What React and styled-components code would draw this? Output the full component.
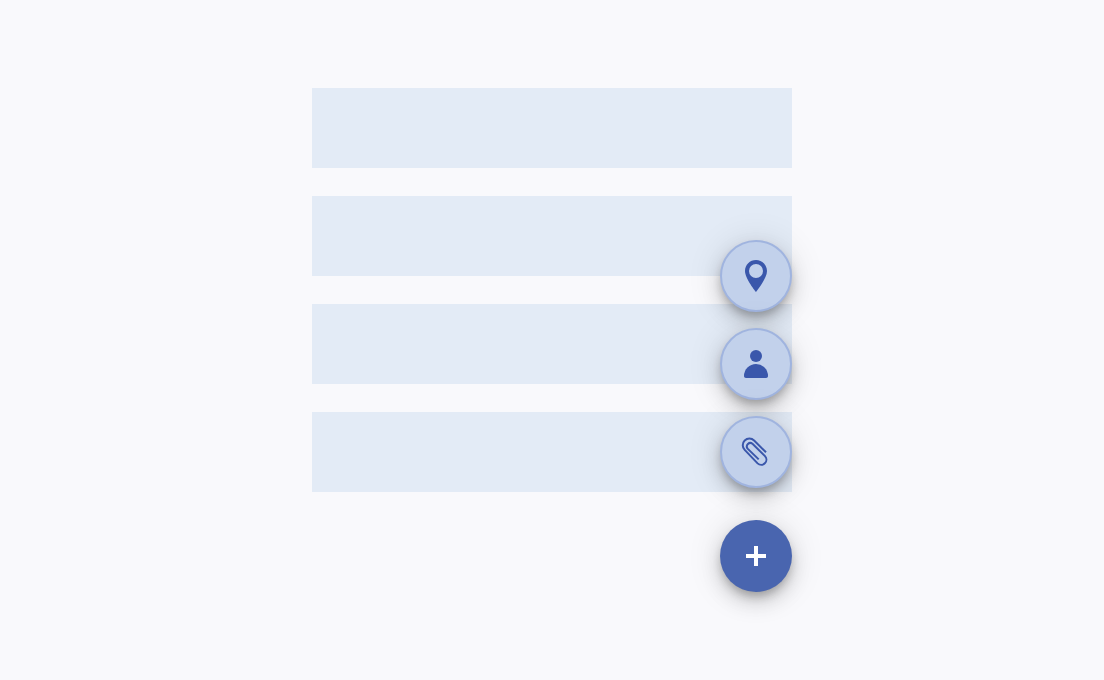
import React, { useState } from 'react';
import styled, { createGlobalStyle } from 'styled-components';

const GlobalStyle = createGlobalStyle`
  *, *::before, *::after {
    box-sizing: border-box;
  }

  body {
    margin: 0;
    background: #f9f9fc;
    font-family: Roboto, sans-serif;
  }
`;

const Page = styled.main`
  display: flex;
  align-items: center;
  justify-content: center;
  min-height: 100vh;
  padding: 24px;
`;

const Content = styled.div`
  position: relative;
  width: 100%;
  max-width: 480px;
  padding-bottom: 100px;
`;

const List = styled.ul`
  display: flex;
  flex-direction: column;
  gap: 28px;
  margin: 0;
  padding: 0;
  list-style: none;
`;

const Row = styled.li`
  height: 80px;
  background: #e3ebf6;
`;

// floats over the bottom right corner of the list
const SpeedDial = styled.div`
  position: absolute;
  right: 0;
  bottom: 0;
  display: flex;
  flex-direction: column;
  gap: 32px;
`;

const Actions = styled.div`
  display: flex;
  flex-direction: column;
  gap: 16px;
`;

const RoundButton = styled.button`
  display: flex;
  align-items: center;
  justify-content: center;
  width: 72px;
  height: 72px;
  padding: 0;
  border: ${({ $primary }) => ($primary ? 'none' : '2px solid #a0b4df')};
  border-radius: 50%;
  background: ${({ $primary }) => ($primary ? '#4965af' : '#c2d1eb')};
  color: ${({ $primary }) => ($primary ? '#fff' : '#3a57ab')};
  box-shadow:
    0 6px 10px -2px rgba(0, 0, 0, 0.24),
    0 10px 20px rgba(0, 0, 0, 0.15),
    0 2px 36px rgba(0, 0, 0, 0.12);
  cursor: pointer;
`;

const Icon = styled.svg`
  display: block;
  width: 40px;
  height: 40px;
`;

const PinIcon = () => (
  <Icon viewBox="0 0 40 40" fill="currentColor" aria-hidden="true">
    <path
      fillRule="evenodd"
      d="M20 4C13.9 4 9 8.9 9 15c0 7.6 11 21 11 21s11-13.4 11-21c0-6.1-4.9-11-11-11zm0 4a7 7 0 1 1 0 14 7 7 0 0 1 0-14z"
    />
  </Icon>
);

const PersonIcon = () => (
  <Icon viewBox="0 0 40 40" fill="currentColor" aria-hidden="true">
    <circle cx="20" cy="12" r="6" />
    <path d="M8 32a12 12 0 0 1 24 0c0 1.2-.8 2-2 2H10c-1.2 0-2-.8-2-2z" />
  </Icon>
);

const ClipIcon = () => (
  <Icon viewBox="0 0 40 40" fill="none" stroke="currentColor" strokeWidth="2" aria-hidden="true">
    <path d="M30 20.3L18.1 8.5A6.6 6.6 0 0 0 8.7 17.9L21.6 31.4A5.2 5.2 0 0 0 29 24.1L16.5 11.7A3.5 3.5 0 0 0 11.6 16.600L22.700 27.400" />
  </Icon>
);

const PlusIcon = () => (
  <Icon viewBox="0 0 40 40" fill="currentColor" aria-hidden="true">
    <path d="M18 10h4v8h8v4h-8v8h-4v-8h-8v-4h8z" />
  </Icon>
);

const actions = [
  { label: 'Share location', Glyph: PinIcon },
  { label: 'Add contact', Glyph: PersonIcon },
  { label: 'Attach file', Glyph: ClipIcon }
];

const rows = [1, 2, 3, 4];

const App = () => {
  const [open, setOpen] = useState(true);

  return (
    <>
      <GlobalStyle />
      <Page>
        <Content>
          <List>
            {rows.map(row => <Row key={row} />)}
          </List>
          <SpeedDial>
            {open && (
              <Actions>
                {actions.map(({ label, Glyph }) => (
                  <RoundButton key={label} type="button" aria-label={label}>
                    <Glyph />
                  </RoundButton>
                ))}
              </Actions>
            )}
            <RoundButton
              $primary
              type="button"
              aria-label="Actions"
              aria-expanded={open}
              onClick={() => setOpen(!open)}
            >
              <PlusIcon />
            </RoundButton>
          </SpeedDial>
        </Content>
      </Page>
    </>
  );
};

export default App;
